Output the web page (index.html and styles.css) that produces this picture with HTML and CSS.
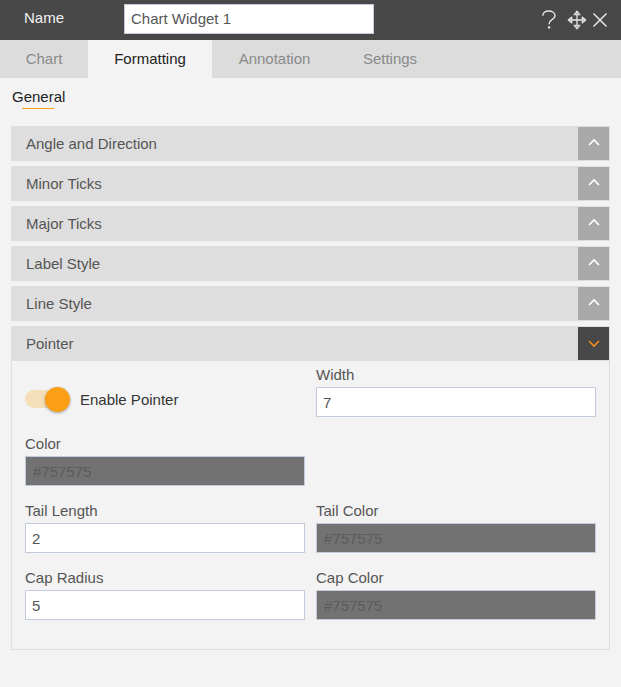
FILE: index.html
```html
<!DOCTYPE html>
<html lang="en">
<head>
<meta charset="utf-8">
<title>Chart Widget</title>
<link rel="stylesheet" href="styles.css">
</head>
<body>
<header class="topbar">
  <span class="name-label">Name</span>
  <input class="name-input" type="text" value="Chart Widget 1">
  <div class="top-icons">
    <svg class="icon-help" width="16" height="22" viewBox="0 0 16 22"><path d="M1.800 6.800C1.800 3.700 4.300 2 7.600 2 11.200 2 14 3.800 14 6.600c0 2.100-1.300 3.100-3.300 4.300C8.900 12 8 13 8 15.200" fill="none" stroke="#e6e6e6" stroke-width="1.400"/><rect x="7" y="17.300" width="2.200" height="2.200" fill="#e6e6e6"/></svg>
    <svg class="icon-move" width="20" height="20" viewBox="0 0 20 20"><path d="M10 2V18M2 10H18" stroke="#e6e6e6" stroke-width="1.300" fill="none"/><path d="M7 4.800L10 1.200 13 4.800ZM7 15.200L10 18.800 13 15.200ZM4.800 7L1.200 10 4.800 13ZM15.200 7L18.800 10 15.200 13Z" fill="none" stroke="#e6e6e6" stroke-width="1.100" stroke-linejoin="round"/></svg>
    <svg class="icon-close" width="16" height="16" viewBox="0 0 16 16"><path d="M1.500 1.500L14.500 14.500M14.500 1.500L1.500 14.500" stroke="#e6e6e6" stroke-width="1.500" fill="none"/></svg>
  </div>
</header>
<nav class="tabs">
  <span class="tab">Chart</span>
  <span class="tab tab-active">Formatting</span>
  <span class="tab">Annotation</span>
  <span class="tab">Settings</span>
</nav>
<div class="subtabs"><span class="subtab">General</span></div>
<main class="accordion">
  <div class="acc-row"><span>Angle and Direction</span><span class="acc-btn"><svg width="12" height="8" viewBox="0 0 12 8"><path d="M1 7L6 2 11 7" fill="none" stroke="#fff" stroke-width="1.600"/></svg></span></div>
  <div class="acc-row"><span>Minor Ticks</span><span class="acc-btn"><svg width="12" height="8" viewBox="0 0 12 8"><path d="M1 7L6 2 11 7" fill="none" stroke="#fff" stroke-width="1.600"/></svg></span></div>
  <div class="acc-row"><span>Major Ticks</span><span class="acc-btn"><svg width="12" height="8" viewBox="0 0 12 8"><path d="M1 7L6 2 11 7" fill="none" stroke="#fff" stroke-width="1.600"/></svg></span></div>
  <div class="acc-row"><span>Label Style</span><span class="acc-btn"><svg width="12" height="8" viewBox="0 0 12 8"><path d="M1 7L6 2 11 7" fill="none" stroke="#fff" stroke-width="1.600"/></svg></span></div>
  <div class="acc-row"><span>Line Style</span><span class="acc-btn"><svg width="12" height="8" viewBox="0 0 12 8"><path d="M1 7L6 2 11 7" fill="none" stroke="#fff" stroke-width="1.600"/></svg></span></div>
  <section class="acc-open">
    <div class="acc-row acc-row-open"><span>Pointer</span><span class="acc-btn acc-btn-dark"><svg width="12" height="8" viewBox="0 0 12 8"><path d="M1 1L6 6 11 1" fill="none" stroke="#f58a1f" stroke-width="1.600"/></svg></span></div>
    <div class="panel">
      <div class="form-grid">
        <div class="toggle-field">
          <span class="toggle"><span class="toggle-track"></span><span class="toggle-knob"></span></span>
          <span class="toggle-label">Enable Pointer</span>
        </div>
        <div class="field"><label>Width</label><input type="text" value="7"></div>
        <div class="field field-color-row"><label>Color</label><input class="swatch" type="text" placeholder="#757575"></div>
        <div class="field-empty"></div>
        <div class="field"><label>Tail Length</label><input type="text" value="2"></div>
        <div class="field"><label>Tail Color</label><input class="swatch" type="text" placeholder="#757575"></div>
        <div class="field"><label>Cap Radius</label><input type="text" value="5"></div>
        <div class="field"><label>Cap Color</label><input class="swatch" type="text" placeholder="#757575"></div>
      </div>
    </div>
  </section>
</main>
</body>
</html>
```
FILE: styles.css
```css
* { box-sizing: border-box; }
html, body { margin: 0; padding: 0; }
body {
  width: 621px;
  height: 687px;
  overflow: hidden;
  background: #f3f3f3;
  font-family: "Liberation Sans", Arial, sans-serif;
  font-size: 15px;
  color: #555;
}
.topbar {
  height: 40px;
  background: #484848;
  display: flex;
  align-items: center;
  padding-left: 24px;
}
.name-label { color: #f2f2f2; width: 100px; margin-top: -6px; }
.name-input {
  width: 250px;
  height: 30px;
  margin-top: -3px;
  border: 1px solid #c2cbd8;
  background: #fff;
  padding: 0 6px;
  font: inherit;
  color: #555;
  outline: none;
}
.top-icons { margin-left: auto; display: flex; align-items: center; padding-right: 13px; }
.icon-help { margin-right: 10px; }
.icon-move { margin-right: 5px; }
.tabs { height: 38px; background: #dcdcdc; display: flex; }
.tab { width: 88px; text-align: center; line-height: 38px; color: #8a8a8a; }
.tab:nth-child(2) { width: 124px; }
.tab:nth-child(3) { width: 125px; }
.tab:nth-child(4) { width: 106px; }
.tab-active { background: #f3f3f3; color: #222; }
.subtabs { height: 48px; padding: 10px 0 0 12px; }
.subtab {
  display: inline-block;
  position: relative;
  color: #222;
  line-height: 18px;
}
.subtab::after {
  content: "";
  position: absolute;
  left: 10px;
  top: 20px;
  width: 32px;
  height: 1px;
  background: #f5a00f;
}
.accordion { padding: 0 11px; display: flex; flex-direction: column; gap: 5px; }
.acc-row {
  height: 35px;
  background: #dedede;
  display: flex;
  align-items: center;
  justify-content: space-between;
  padding: 1px 1px 1px 15px;
  color: #555;
}
.acc-btn {
  width: 31px;
  height: 33px;
  background: #a9a9a9;
  display: flex;
  align-items: center;
  justify-content: center;
  padding-bottom: 4px;
}
.acc-btn-dark { background: #484848; padding-bottom: 0; }
.panel {
  border: 1px solid #e0e0e0;
  border-top: 0;
  height: 289px;
  padding: 5px 13px 0;
}
.form-grid {
  display: grid;
  grid-template-columns: 280px 280px;
  column-gap: 11px;
  row-gap: 16px;
}
.field { display: flex; flex-direction: column; }
.field label { height: 21px; line-height: 18px; color: #555; }
.field input {
  height: 30px;
  border: 1px solid #c2cbd8;
  background: #fff;
  padding: 0 6px;
  font: inherit;
  color: #555;
  outline: none;
}
.field input.swatch { background: #727272; padding-left: 7px; }
.field input.swatch::placeholder { color: #5c5c5c; opacity: 1; }
.toggle-field { display: flex; align-items: center; height: 51px; margin-bottom: 2px; padding-top: 15px; }
.toggle { position: relative; display: block; width: 45px; height: 25px; margin-right: 10px; }
.toggle-track {
  position: absolute;
  left: 0;
  top: 3px;
  width: 35px;
  height: 18px;
  border-radius: 9px;
  background: #f5dfb8;
}
.toggle-knob {
  position: absolute;
  left: 20px;
  top: 0;
  width: 25px;
  height: 25px;
  border-radius: 50%;
  background: #fd9f14;
  box-shadow: 0 1px 3px rgba(0, 0, 0, 0.35);
}
.toggle-label { color: #333; }
```
